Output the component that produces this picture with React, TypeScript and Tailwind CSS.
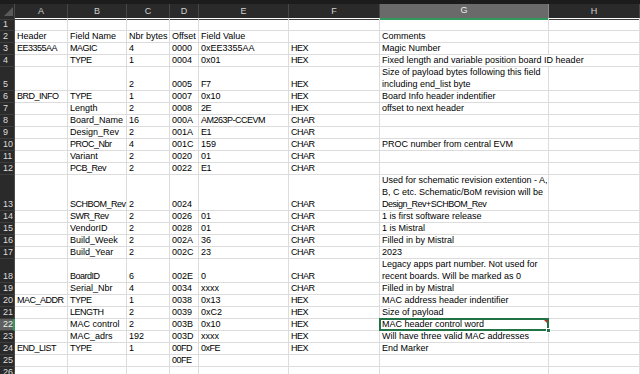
import React from 'react';

type Row = {
  n: number;
  h: 1 | 2 | 3;
  cells: (string | string[])[];
};

const gridCols = 'grid grid-cols-[15px_53px_59px_43px_29px_90px_91px_169px_91px]';

const heights: Record<number, string> = {
  1: 'h-[12px]',
  2: 'h-[24px]',
  3: 'h-[36px]',
};

const rows: Row[] = [
  { n: 2, h: 1, cells: ['Header', 'Field Name', 'Nbr bytes', 'Offset', 'Field Value', '', 'Comments'] },
  { n: 3, h: 1, cells: ['EE3355AA', 'MAGIC', '4', '0000', '0xEE3355AA', 'HEX', 'Magic Number'] },
  { n: 4, h: 1, cells: ['', 'TYPE', '1', '0004', '0x01', 'HEX', 'Fixed length and variable position board ID header'] },
  { n: 5, h: 2, cells: ['', '', '2', '0005', 'F7', 'HEX', ['Size of payload bytes following this field', 'including end_list byte']] },
  { n: 6, h: 1, cells: ['BRD_INFO', 'TYPE', '1', '0007', '0x10', 'HEX', 'Board Info header indentifier'] },
  { n: 7, h: 1, cells: ['', 'Length', '2', '0008', '2E', 'HEX', 'offset to next header'] },
  { n: 8, h: 1, cells: ['', 'Board_Name', '16', '000A', 'AM263P-CCEVM', 'CHAR', ''] },
  { n: 9, h: 1, cells: ['', 'Design_Rev', '2', '001A', 'E1', 'CHAR', ''] },
  { n: 10, h: 1, cells: ['', 'PROC_Nbr', '4', '001C', '159', 'CHAR', 'PROC number from central EVM'] },
  { n: 11, h: 1, cells: ['', 'Variant', '2', '0020', '01', 'CHAR', ''] },
  { n: 12, h: 1, cells: ['', 'PCB_Rev', '2', '0022', 'E1', 'CHAR', ''] },
  {
    n: 13,
    h: 3,
    cells: [
      '',
      'SCHBOM_Rev',
      '2',
      '0024',
      '',
      'CHAR',
      ['Used for schematic revision extention - A,', 'B, C etc. Schematic/BoM revision will be', 'Design_Rev+SCHBOM_Rev'],
    ],
  },
  { n: 14, h: 1, cells: ['', 'SWR_Rev', '2', '0026', '01', 'CHAR', '1 is first software release'] },
  { n: 15, h: 1, cells: ['', 'VendorID', '2', '0028', '01', 'CHAR', '1 is Mistral'] },
  { n: 16, h: 1, cells: ['', 'Build_Week', '2', '002A', '36', 'CHAR', 'Filled in by Mistral'] },
  { n: 17, h: 1, cells: ['', 'Build_Year', '2', '002C', '23', 'CHAR', '2023'] },
  {
    n: 18,
    h: 2,
    cells: ['', 'BoardID', '6', '002E', '0', 'CHAR', ['Legacy apps part number. Not used for', 'recent boards. Will be marked as 0']],
  },
  { n: 19, h: 1, cells: ['', 'Serial_Nbr', '4', '0034', 'xxxx', 'CHAR', 'Filled in by Mistral'] },
  { n: 20, h: 1, cells: ['MAC_ADDR', 'TYPE', '1', '0038', '0x13', 'HEX', 'MAC address header indentifier'] },
  { n: 21, h: 1, cells: ['', 'LENGTH', '2', '0039', '0xC2', 'HEX', 'Size of payload'] },
  { n: 22, h: 1, cells: ['', 'MAC control', '2', '003B', '0x10', 'HEX', 'MAC header control word'] },
  { n: 23, h: 1, cells: ['', 'MAC_adrs', '192', '003D', 'xxxx', 'HEX', 'Will have three valid MAC addresses'] },
  { n: 24, h: 1, cells: ['END_LIST', 'TYPE', '1', '00FD', '0xFE', 'HEX', 'End Marker'] },
  { n: 25, h: 1, cells: ['', '', '', '00FE', '', '', ''] },
  { n: 26, h: 1, cells: ['', '', '', '', '', '', ''] },
];

const letters = ['A', 'B', 'C', 'D', 'E', 'F', 'G', 'H'];

// Calibri caps are narrower than Arial's, so caps-heavy strings get pulled in a little
const isCapsHeavy = (s: string) => {
  const letters = s.replace(/[^A-Za-z]/g, '');
  if (!letters.length) return false;
  const caps = letters.replace(/[^A-Z]/g, '').length;
  return caps / s.length > 0.4;
};

function RowLabel({ n, h, active }: { n: number; h: string; active?: boolean }) {
  return (
    <div
      className={
        active
          ? `${h} flex items-end pl-[3px] bg-[#5f5f5f] text-[#e8f3ec] border-b border-b-[#3d3d3d] border-r-2 border-r-[#2f9a5c] leading-[12px]`
          : `${h} flex items-end pl-[3px] bg-[#2a2a2a] text-[#dcdcdc] border-b border-b-[#3d3d3d] border-r border-r-[#4a4a4a] leading-[12px]`
      }
    >
      {n}
    </div>
  );
}

function Cell({ value, h, noRight, selected }: { value: string | string[]; h: string; noRight?: boolean; selected?: boolean }) {
  const lines = Array.isArray(value) ? value : [value];
  return (
    <div
      className={`${h} relative flex flex-col justify-end px-[2px] whitespace-nowrap leading-[12px] border-b border-[#dcdcdc] ${
        noRight ? '' : 'border-r'
      }`}
    >
      {lines.map((l, i) => (
        <span key={i} className={isCapsHeavy(l) ? 'relative z-[1] tracking-[-0.5px]' : 'relative z-[1]'}>
          {l}
        </span>
      ))}
      {selected && (
        <>
          <div className="absolute -left-px -top-px -right-px -bottom-px border-2 border-[#217346] z-10" />
          <div className="absolute right-[1px] top-[1px] w-0 h-0 border-l-[3px] border-l-transparent border-t-[3px] border-t-[#e0201b] z-20" />
          <div className="absolute -right-[3px] -bottom-[3px] w-[5px] h-[5px] bg-[#217346] border border-white z-20" />
        </>
      )}
    </div>
  );
}

export default function App() {
  return (
    <div className="w-[640px] h-[374px] overflow-hidden bg-white text-black text-[9px] font-['Liberation_Sans',Arial,sans-serif]">
      <div className="h-[4px] bg-[#1c1c1c]" />
      <div className={`${gridCols} h-[14px] bg-[#2a2a2a] text-[#d0d0d0]`}>
        <div className="relative border-r border-[#4a4a4a] border-b border-b-[#3d3d3d]">
          <svg className="absolute left-[4px] top-[3px]" width="9" height="9" viewBox="0 0 9 9">
            <polygon points="9,0 9,9 0,9" fill="#5a5a5a" />
          </svg>
        </div>
        {letters.map((l) =>
          l === 'G' ? (
            <div
              key={l}
              className="flex items-center justify-center bg-[#6a6a6a] text-[#ececec] border-r border-[#8a8a8a] border-b-2 border-b-[#2f9a5c]"
            >
              {l}
            </div>
          ) : (
            <div key={l} className="flex items-center justify-center border-r border-[#474747] border-b border-b-[#3d3d3d]">
              {l}
            </div>
          ),
        )}
      </div>

      <div className={gridCols}>
        <RowLabel n={1} h="h-[13px]" />
        {letters.map((l) => (
          <Cell key={l} value="" h="h-[13px]" />
        ))}
      </div>

      {rows.map((r) => {
        const h = heights[r.h];
        return (
          <div key={r.n} className={gridCols}>
            <RowLabel n={r.n} h={h} active={r.n === 22} />
            {r.cells.map((c, i) => (
              <Cell key={i} value={c} h={h} noRight={r.n === 4 && i === 6} selected={r.n === 22 && i === 6} />
            ))}
            <Cell value="" h={h} />
          </div>
        );
      })}
    </div>
  );
}
